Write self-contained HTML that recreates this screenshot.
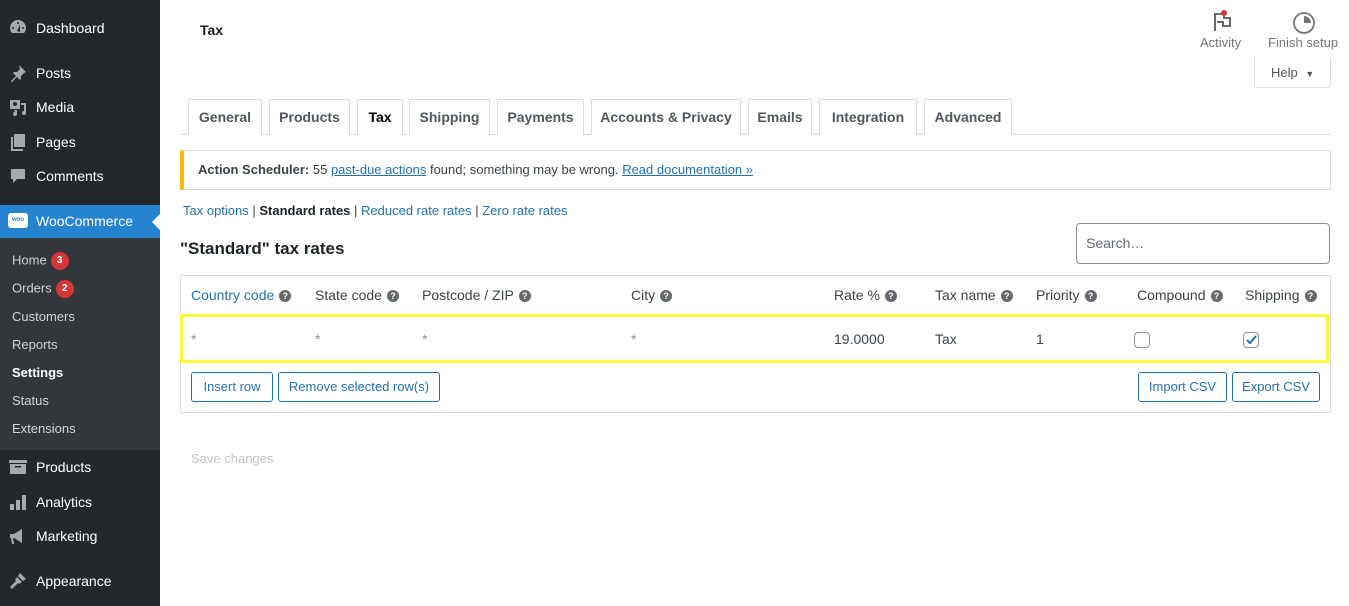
<!DOCTYPE html>
<html><head><meta charset="utf-8">
<style>
*{box-sizing:border-box;margin:0;padding:0}
body{width:1349px;height:606px;overflow:hidden;background:#fff;font-family:"Liberation Sans",sans-serif;font-size:14px;color:#3c434a;position:relative}
.a{position:absolute;white-space:nowrap}
#side{position:absolute;left:0;top:0;width:160px;height:606px;background:#23282d}
.m{position:absolute;left:36px;color:#fff;font-size:14px;line-height:18px}
.ic{position:absolute;left:8px;width:20px;height:20px;margin-top:-2px}
.s{position:absolute;left:12px;color:#d2d4d6;font-size:13px;line-height:16px}
.badge{display:inline-block;background:#d63638;color:#fff;border-radius:9px;font-size:10px;font-weight:bold;width:18px;height:18px;line-height:18px;text-align:center;margin-left:4px;vertical-align:middle}
.tab{position:absolute;top:99px;height:36px;border:1px solid #dcdcde;border-bottom:none;background:#fff;color:#50575e;font-weight:bold;font-size:14px;line-height:34px;text-align:center}
.q{display:inline-block;width:12px;height:12px;border-radius:50%;background:#646970;color:#fff;font-size:9px;font-weight:bold;line-height:12px;text-align:center;vertical-align:middle;margin-left:5px}
.th{position:absolute;top:287px;font-size:14px;color:#3c434a}
.td{position:absolute;top:331px;font-size:14px;color:#3c434a}
.btn{position:absolute;top:372px;height:30px;border:1px solid #2271b1;border-radius:3px;color:#2271b1;font-size:13px;line-height:28px;text-align:center;background:#fff}
a{color:#2271b1}
</style></head><body>
<div id="side">
 <svg class="ic" style="top:19px" viewBox="0 0 20 20"><path fill="#a7aaad" d="M10 3a8 8 0 0 0-8 8c0 2 .7 3.7 2 5h12a8 8 0 0 0 2-5 8 8 0 0 0-8-8zm0 2a1 1 0 1 1 0 2 1 1 0 0 1 0-2zM5 10a1 1 0 1 1 0 2 1 1 0 0 1 0-2zm10 0a1 1 0 1 1 0 2 1 1 0 0 1 0-2zM9 14l3-6 0 7z"/></svg>
 <div class="m" style="top:19px">Dashboard</div>
 <svg class="ic" style="top:65px" viewBox="0 0 20 20"><path fill="#a7aaad" d="M11 2l7 7-2 1-3 3 0 3-1 1-3-3-5 5-1 0 0-1 5-5-3-3 1-1 3 0 3-3z"/></svg>
 <div class="m" style="top:64px">Posts</div>
 <svg class="ic" style="top:99px" viewBox="0 0 20 20"><path fill="#a7aaad" d="M2 3h10v9H2zM13 6h5v10a2 2 0 1 1-2-2V8h-3zM6 13h3v4a2 2 0 1 1-2-2z"/><circle cx="7" cy="7" r="2" fill="#23282d"/></svg>
 <div class="m" style="top:98px">Media</div>
 <svg class="ic" style="top:134px" viewBox="0 0 20 20"><path fill="#a7aaad" d="M6 2h11v13H6zM3 5h2v12h10v2H3z"/></svg>
 <div class="m" style="top:133px">Pages</div>
 <svg class="ic" style="top:168px" viewBox="0 0 20 20"><path fill="#a7aaad" d="M3 3h14v10H9l-4 4v-4H3z"/></svg>
 <div class="m" style="top:167px">Comments</div>
 <div style="position:absolute;top:205px;left:0;width:160px;height:33px;background:#2683cf"></div>
 <div style="position:absolute;top:214px;left:152px;width:0;height:0;border:8px solid transparent;border-right-color:#fff;border-left:none"></div>
 <div style="position:absolute;top:213px;left:8px;width:20px;height:15px;background:#fff;border-radius:3px;color:#2683cf;font-size:6px;font-weight:bold;text-align:center;line-height:15px">woo</div>
 <div class="m" style="top:212px">WooCommerce</div>
 <div style="position:absolute;top:238px;left:0;width:160px;height:212px;background:#32373c"></div>
 <div class="s" style="top:252px">Home<span class="badge">3</span></div>
 <div class="s" style="top:280px">Orders<span class="badge">2</span></div>
 <div class="s" style="top:309px">Customers</div>
 <div class="s" style="top:337px">Reports</div>
 <div class="s" style="top:365px;color:#fff;font-weight:bold">Settings</div>
 <div class="s" style="top:393px">Status</div>
 <div class="s" style="top:421px">Extensions</div>
 <svg class="ic" style="top:459px" viewBox="0 0 20 20"><path fill="#a7aaad" d="M1 3h18v3H1zM2 7h16v10H2z"/><rect x="7" y="9" width="6" height="1.5" fill="#23282d"/></svg>
 <div class="m" style="top:458px">Products</div>
 <svg class="ic" style="top:494px" viewBox="0 0 20 20"><path fill="#a7aaad" d="M2 12h4v6H2zM8 8h4v10H8zM14 3h4v15h-4z"/></svg>
 <div class="m" style="top:493px">Analytics</div>
 <svg class="ic" style="top:528px" viewBox="0 0 20 20"><path fill="#a7aaad" d="M2 8h4l8-5v14l-8-5H5l1 6H4l-1-6H2z"/></svg>
 <div class="m" style="top:527px">Marketing</div>
 <svg class="ic" style="top:573px" viewBox="0 0 20 20"><path fill="#a7aaad" d="M12 2l6 6-3 2-5-5zM9 6l5 5-3 2-1-1-6 6-2-2 6-6-1-1z"/></svg>
 <div class="m" style="top:572px">Appearance</div>
</div>

<div class="a" style="left:200px;top:22px;font-weight:bold;color:#1e1e1e;font-size:14px">Tax</div>
<svg class="a" style="left:1212px;top:9px" width="22" height="24" viewBox="0 0 22 24"><path d="M3 22V5h9v4h6v8h-7v-4H5" fill="none" stroke="#50575e" stroke-width="1.8"/><circle cx="12" cy="4" r="3" fill="#d63638"/></svg>
<div class="a" style="left:1200px;top:35px;font-size:13px;color:#757575">Activity</div>
<svg class="a" style="left:1292px;top:11px" width="24" height="24" viewBox="0 0 24 24"><circle cx="12" cy="12" r="10" fill="none" stroke="#757575" stroke-width="1.8"/><path d="M12 5a7 7 0 0 1 7 7h-7z" fill="#757575"/></svg>
<div class="a" style="left:1268px;top:35px;font-size:13px;color:#757575">Finish setup</div>
<div class="a" style="left:1254px;top:58px;width:77px;height:30px;border:1px solid #dcdcde;border-top:none;border-radius:0 0 4px 4px;font-size:13px;color:#50575e;line-height:30px;padding-left:16px">Help <span style="font-size:9px;margin-left:4px">▼</span></div>

<div class="a" style="left:180px;top:134px;width:1151px;height:1px;background:#dcdcde"></div>
<div class="tab" style="left:188px;width:74px">General</div>
<div class="tab" style="left:269px;width:81px">Products</div>
<div class="tab" style="left:357px;width:46px;color:#000;height:36px;background:#fff">Tax</div>
<div class="tab" style="left:409px;width:81px">Shipping</div>
<div class="tab" style="left:497px;width:87px">Payments</div>
<div class="tab" style="left:591px;width:150px">Accounts &amp; Privacy</div>
<div class="tab" style="left:748px;width:64px">Emails</div>
<div class="tab" style="left:819px;width:98px">Integration</div>
<div class="tab" style="left:924px;width:88px">Advanced</div>

<div class="a" style="left:180px;top:150px;width:1151px;height:40px;border:1px solid #dcdcde;border-left:4px solid #ffb900;padding-left:14px;line-height:38px;font-size:13px"><b>Action Scheduler:</b> 55 <a href="#">past-due actions</a> found; something may be wrong. <a href="#">Read documentation »</a></div>

<div class="a" style="left:183px;top:203px;font-size:13px;color:#3c434a"><span style="color:#2271b1">Tax options</span> | <b style="color:#1d2327">Standard rates</b> | <span style="color:#2271b1">Reduced rate rates</span> | <span style="color:#2271b1">Zero rate rates</span></div>
<div class="a" style="left:180px;top:239px;font-size:17px;font-weight:bold;color:#1d2327">"Standard" tax rates</div>
<div class="a" style="left:1076px;top:223px;width:254px;height:41px;border:1px solid #8c8f94;border-radius:4px;padding-left:9px;line-height:39px;color:#646970;font-size:14px">Search…</div>

<div class="a" style="left:180px;top:275px;width:1151px;height:138px;border:1px solid #dcdcde"></div>
<div class="a" style="left:180px;top:314px;width:1149px;height:49px;border:3px solid #f9f93a"></div>
<div class="th" style="left:191px;color:#2271b1">Country code<span class="q">?</span></div>
<div class="th" style="left:315px">State code<span class="q">?</span></div>
<div class="th" style="left:422px">Postcode / ZIP<span class="q">?</span></div>
<div class="th" style="left:631px">City<span class="q">?</span></div>
<div class="th" style="left:834px">Rate %<span class="q">?</span></div>
<div class="th" style="left:935px">Tax name<span class="q">?</span></div>
<div class="th" style="left:1036px">Priority<span class="q">?</span></div>
<div class="th" style="left:1137px">Compound<span class="q">?</span></div>
<div class="th" style="left:1245px">Shipping<span class="q">?</span></div>
<div class="td" style="left:191px;color:#8c8f94">*</div>
<div class="td" style="left:315px;color:#8c8f94">*</div>
<div class="td" style="left:422px;color:#8c8f94">*</div>
<div class="td" style="left:631px;color:#8c8f94">*</div>
<div class="td" style="left:834px">19.0000</div>
<div class="td" style="left:935px">Tax</div>
<div class="td" style="left:1036px">1</div>
<div class="a" style="left:1134px;top:332px;width:16px;height:16px;border:1px solid #8c8f94;border-radius:4px"></div>
<div class="a" style="left:1243px;top:332px;width:16px;height:16px;border:1px solid #8c8f94;border-radius:4px"><svg width="14" height="14" viewBox="0 0 14 14" style="position:absolute;left:0;top:0"><path d="M3 7l3 3 6-7" fill="none" stroke="#2271b1" stroke-width="2"/></svg></div>

<div class="btn" style="left:191px;width:82px">Insert row</div>
<div class="btn" style="left:278px;width:162px">Remove selected row(s)</div>
<div class="btn" style="left:1138px;width:89px">Import CSV</div>
<div class="btn" style="left:1232px;width:88px">Export CSV</div>

<div class="a" style="left:191px;top:451px;font-size:13px;color:#c3c4c7">Save changes</div>
</body></html>
